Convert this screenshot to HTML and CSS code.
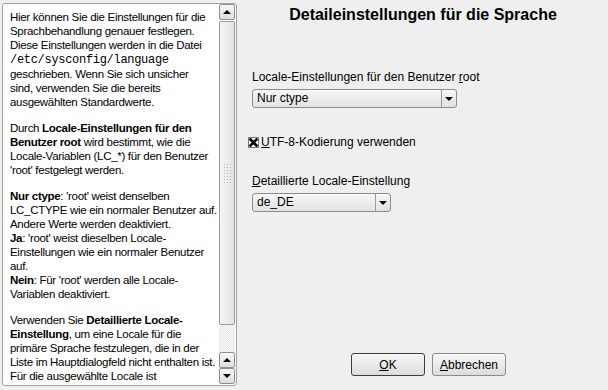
FILE: index.html
```html
<!DOCTYPE html>
<html lang="de">
<head>
    <meta charset="UTF-8">
    <title>Detaileinstellungen für die Sprache</title>
    <link rel="stylesheet" href="styles.css">
</head>
<body>
    <div class="dialog">
        <div class="help">
            <div class="help-text">
                <p>Hier können Sie die Einstellungen für die Sprachbehandlung genauer festlegen. Diese Einstellungen werden in die Datei <code>/etc/sysconfig/language</code> geschrieben. Wenn Sie sich unsicher<br>sind, verwenden Sie die bereits ausgewählten Standardwerte.</p>
                <p>Durch <b>Locale-Einstellungen für den Benutzer root</b> wird bestimmt, wie die Locale-Variablen (LC_*) für den Benutzer 'root' festgelegt werden.</p>
                <p><b>Nur ctype</b>: 'root' weist denselben LC_CTYPE wie ein normaler Benutzer auf. Andere Werte werden deaktiviert.<br>
                <b>Ja</b>: 'root' weist dieselben Locale-Einstellungen wie ein normaler Benutzer auf.<br>
                <b>Nein</b>: Für 'root' werden alle Locale-Variablen deaktiviert.</p>
                <p>Verwenden Sie <b>Detaillierte Locale-Einstellung</b>, um eine Locale für die primäre Sprache festzulegen, die in der Liste im Hauptdialogfeld nicht enthalten ist. Für die ausgewählte Locale ist möglicherweise keine Übersetzung vorhanden.</p>
            </div>
            <div class="scrollbar">
                <div class="sb-btn"><span class="tri-up"></span></div>
                <div class="sb-thumb"><span class="grip"></span></div>
                <div class="sb-track"></div>
                <div class="sb-btn"><span class="tri-up"></span></div>
                <div class="sb-btn"><span class="tri-down"></span></div>
            </div>
        </div>

        <div class="settings">
            <h1 class="title">Detaileinstellungen für die Sprache</h1>

            <label class="field-label">Locale-Einstellungen für den Benutzer <u>r</u>oot</label>
            <div class="combo combo-wide">
                <span class="combo-value">Nur ctype</span>
                <span class="combo-arrow"><span class="tri-down"></span></span>
            </div>

            <div class="check-row">
                <svg class="check" width="11" height="11" viewBox="0 0 11 11">
                    <rect x="0.5" y="0.5" width="10" height="10" fill="#fff" stroke="#7a7a7a"/>
                    <path d="M2.5 2.5 L8.5 8.5 M8.5 2.5 L2.5 8.5" stroke="#000" stroke-width="2.6" stroke-linecap="square"/>
                </svg>
                <span><u>U</u>TF-8-Kodierung verwenden</span>
            </div>

            <label class="field-label"><u>D</u>etaillierte Locale-Einstellung</label>
            <div class="combo combo-narrow">
                <span class="combo-value">de_DE</span>
                <span class="combo-arrow"><span class="tri-down"></span></span>
            </div>

            <div class="buttons">
                <button class="btn btn-default"><u>O</u>K</button>
                <button class="btn"><u>A</u>bbrechen</button>
            </div>
        </div>
    </div>
</body>
</html>
```

FILE: styles.css
```css
body {
    margin: 0;
    background: #efefef;
    font-family: "Liberation Sans", Arial, sans-serif;
    font-size: 12px;
    color: #000;
}
.dialog {
    display: grid;
    grid-template-columns: 238px 1fr;
    height: 390px;
}

/* help panel on the left */
.help {
    margin: 3px 0 0 2px;
    width: 235px;
    height: 383px;
    box-sizing: border-box;
    border: 1px solid #a2a2a2;
    border-radius: 3px;
    background: #fff;
    display: flex;
    overflow: hidden;
}
.help-text {
    flex: 1;
    padding: 6px 0 0 7px;
    font-size: 11.5px;
    line-height: 14px;
    letter-spacing: -0.3px;
    overflow: hidden;
}
.help-text p {
    margin: 0 0 12px;
}
.help-text code {
    font-family: "Liberation Mono", "Courier New", monospace;
    font-size: 12px;
    letter-spacing: -0.3px;
}
.scrollbar {
    width: 16px;
    margin: 0 1px 1px 0;
    display: flex;
    flex-direction: column;
}
.sb-btn {
    height: 16px;
    box-sizing: border-box;
    border: 1px solid #8e8e8e;
    border-radius: 2px;
    background: linear-gradient(#f8f8f8, #dedede);
    display: flex;
    align-items: center;
    justify-content: center;
}
.sb-thumb {
    height: 304px;
    margin-top: 1px;
    box-sizing: border-box;
    border: 1px solid #9a9a9a;
    border-radius: 2px;
    background: linear-gradient(90deg, #f4f4f4, #e4e4e4);
    display: flex;
    align-items: center;
    justify-content: center;
}
.grip {
    width: 8px;
    height: 20px;
    background: radial-gradient(circle, #b4b4b4 0.7px, transparent 1px) 0 0 / 3px 3px;
}
.sb-track {
    flex: 1;
    background: repeating-conic-gradient(#e6e6e6 0 25%, #fafafa 0 50%) 0 0 / 2px 2px;
}
.tri-up,
.tri-down {
    width: 0;
    height: 0;
    border-left: 4px solid transparent;
    border-right: 4px solid transparent;
}
.tri-up {
    border-bottom: 4px solid #000;
}
.tri-down {
    border-top: 4px solid #000;
}

/* settings on the right */
.settings {
    display: flex;
    flex-direction: column;
    align-items: flex-start;
    padding: 5px 0 14px 14px;
}
.title {
    align-self: stretch;
    margin: 0 0 46px -14px;
    font-size: 16px;
    line-height: 19px;
    text-align: center;
}
.field-label {
    line-height: 14px;
}
.combo {
    display: flex;
    height: 19px;
    margin-top: 5px;
    box-sizing: border-box;
    border: 1px solid #8c8c8c;
    border-radius: 3px;
    background: linear-gradient(#f7f7f7, #e2e2e2);
}
.combo-wide {
    width: 205px;
}
.combo-narrow {
    width: 139px;
}
.combo-value {
    flex: 1;
    padding-left: 4px;
    line-height: 17px;
}
.combo-arrow {
    width: 14px;
    border-left: 1px solid #9a9a9a;
    display: flex;
    align-items: center;
    justify-content: center;
}
.check-row {
    display: flex;
    align-items: center;
    gap: 2px;
    margin: 27px 0 25px -4px;
    line-height: 14px;
}
.buttons {
    display: flex;
    gap: 7px;
    margin-top: auto;
    padding-left: 99px;
}
.btn {
    width: 74px;
    height: 23px;
    padding: 0;
    border: 1px solid #8c8c8c;
    border-radius: 3px;
    background: linear-gradient(#f8f8f8, #dcdcdc);
    font-family: inherit;
    font-size: 12px;
    color: #000;
}
.btn-default {
    border-color: #3c3c3c;
}
```
